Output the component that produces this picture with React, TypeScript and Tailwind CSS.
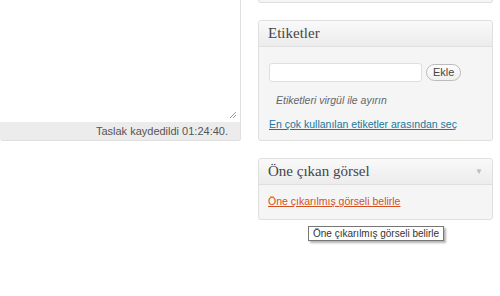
import { useState } from 'react';

function Box({
  title,
  arrow,
  children,
}: {
  title: string;
  arrow?: boolean;
  children: React.ReactNode;
}) {
  return (
    <div className="rounded-[3px] border border-[#dfdfdf] bg-[#f5f5f5] shadow-[inset_0_1px_0_#fff]">
      <div className="flex h-[26px] items-center justify-between rounded-t-[3px] border-b border-[#dfdfdf] bg-gradient-to-b from-[#f9f9f9] to-[#ececec] pl-[9px] pr-[9px]">
        <h3 className="font-['Liberation_Serif',serif] text-[15px] leading-none text-[#464646]">
          {title}
        </h3>
        {arrow ? <span className="text-[8px] leading-none text-[#bbb]">▼</span> : null}
      </div>
      {children}
    </div>
  );
}

export default function App() {
  const [tag, setTag] = useState('');

  return (
    <div className="flex h-[296px] w-[500px] bg-white font-['Liberation_Sans',Arial,sans-serif] text-[12px] text-[#333]">
      <div className="w-[241px] shrink-0">
        <div className="relative h-[122px] border-r border-[#dfdfdf] bg-white">
          <svg
            className="absolute bottom-[3px] right-[3px]"
            width="8"
            height="8"
            viewBox="0 0 8 8"
          >
            <path d="M1 7L7 1M4 7L7 4" stroke="#999" strokeWidth="1" />
          </svg>
        </div>
        <div className="flex h-[19px] items-center justify-end rounded-b-[3px] border-r border-b border-[#dfdfdf] bg-[#ececec] pr-[12px] text-[11px] text-[#555]">
          Taslak kaydedildi 01:24:40.
        </div>
      </div>

      <div className="ml-[17px] w-[235px] shrink-0">
        <div className="h-[3px] rounded-b-[3px] border-x border-b border-[#dfdfdf] bg-[#f5f5f5]" />

        <div className="mt-[17px]">
          <Box title="Etiketler">
            <div className="px-[10px] pt-[16px] pb-[9px]">
              <div className="flex items-center">
                <input
                  className="h-[19px] w-[153px] rounded-[3px] border border-[#dfdfdf] bg-white px-1 text-[12px] outline-none"
                  value={tag}
                  onChange={(e) => setTag(e.target.value)}
                />
                <button
                  className="ml-[4px] h-[17px] rounded-full border border-[#bbb] bg-gradient-to-b from-[#fefefe] to-[#f0f0f0] px-[6px] text-[11px] leading-none text-[#464646]"
                  type="button"
                >
                  Ekle
                </button>
              </div>
              <p className="mt-[11px] pl-[7px] text-[10.5px] leading-[14px] italic text-[#666]">
                Etiketleri virgül ile ayırın
              </p>
              <a className="mt-[10px] block text-[10.5px] leading-[14px] text-[#21759b] underline" href="#">
                En çok kullanılan etiketler arasından seç
              </a>
            </div>
          </Box>
        </div>

        <div className="mt-[17px]">
          <Box title="Öne çıkan görsel" arrow>
            <div className="px-[9px] pt-[9px] pb-[11px]">
              <a className="block text-[10.5px] leading-[14px] text-[#d54e21] underline" href="#">
                Öne çıkarılmış görseli belirle
              </a>
            </div>
          </Box>
        </div>

        <div className="relative">
          <div className="absolute left-[50px] top-[6px] whitespace-nowrap border border-[#767676] bg-white px-[4px] text-[10px] leading-[13px] text-[#333] shadow-[2px_2px_2px_rgba(0,0,0,0.3)]">
            Öne çıkarılmış görseli belirle
          </div>
        </div>
      </div>
    </div>
  );
}
